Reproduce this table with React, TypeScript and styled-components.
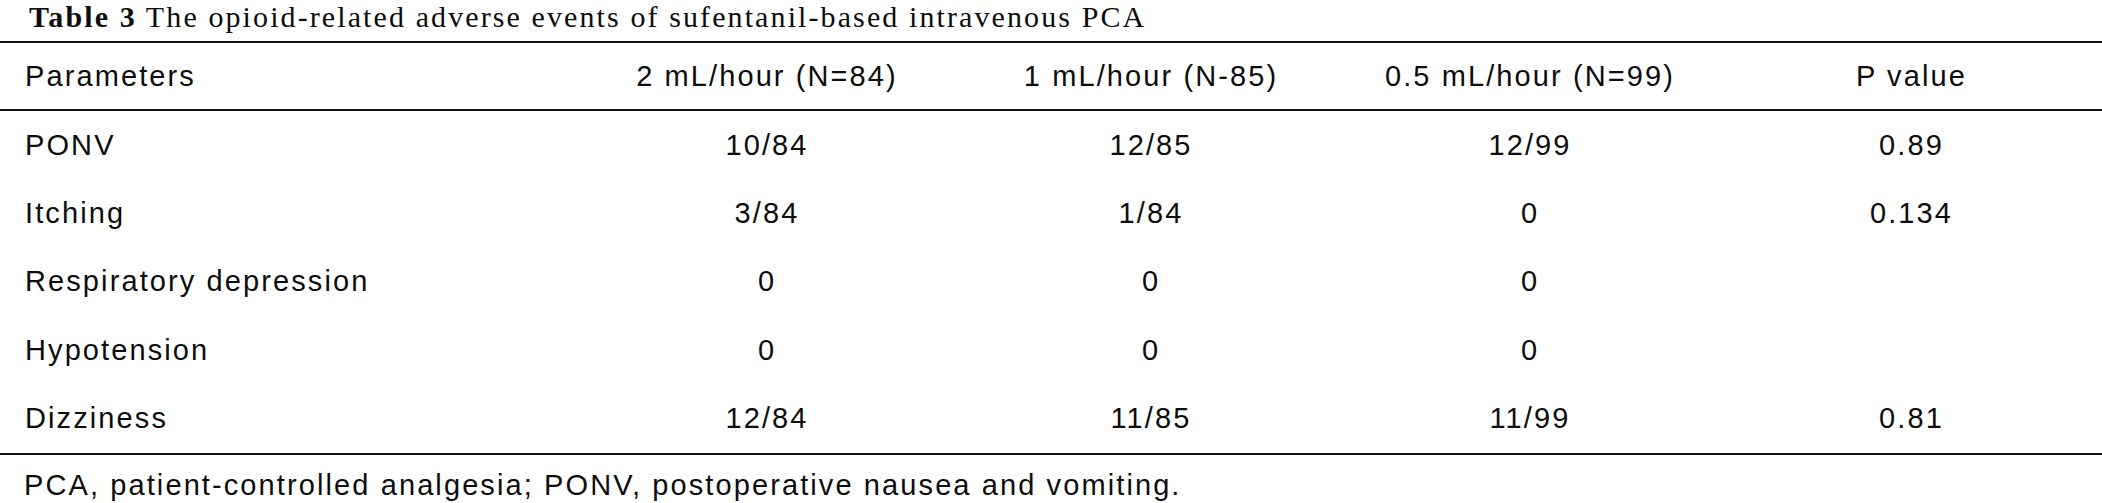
import React from "react";
import styled, { createGlobalStyle } from "styled-components";

const Global = createGlobalStyle`
  html, body { margin: 0; padding: 0; background: #fff; }
  body { width: 2102px; overflow: hidden; }
`;

const Page = styled.div`
  width: 2102px;
  height: 503px;
  background: #fff;
  color: #0d0d0d;
  overflow: hidden;
`;

const Caption = styled.div`
  font-family: "Liberation Serif", "Times New Roman", serif;
  font-size: 30px;
  line-height: 33px;
  padding: 0 0 8px 29px;
  white-space: nowrap;
  letter-spacing: 2.1px;
`;

const CaptionLabel = styled.b`
  font-weight: 700;
`;

const Table = styled.div`
  display: grid;
  grid-template-columns: 571px 392px 376px 382px 381px;
  border-top: 2px solid #111;
  border-bottom: 2px solid #111;
  font-family: "Liberation Sans", Arial, sans-serif;
  font-size: 29px;
  letter-spacing: 2.1px;
`;

const Cell = styled.div<{ $first?: boolean; $head?: boolean }>`
  display: flex;
  align-items: center;
  justify-content: ${(p) => (p.$first ? "flex-start" : "center")};
  padding-left: ${(p) => (p.$first ? "25px" : "0")};
  height: ${(p) => (p.$head ? "66px" : "68.4px")};
  border-bottom: ${(p) => (p.$head ? "2px solid #111" : "none")};
  white-space: nowrap;
`;

const Footnote = styled.div`
  font-family: "Liberation Sans", Arial, sans-serif;
  font-size: 29px;
  line-height: 33px;
  letter-spacing: 2.1px;
  padding: 14px 0 0 24px;
  white-space: nowrap;
`;

const headers = [
  "Parameters",
  "2 mL/hour (N=84)",
  "1 mL/hour (N-85)",
  "0.5 mL/hour (N=99)",
  "P value",
];

const rows: string[][] = [
  ["PONV", "10/84", "12/85", "12/99", "0.89"],
  ["Itching", "3/84", "1/84", "0", "0.134"],
  ["Respiratory depression", "0", "0", "0", ""],
  ["Hypotension", "0", "0", "0", ""],
  ["Dizziness", "12/84", "11/85", "11/99", "0.81"],
];

export default function App() {
  return (
    <Page>
      <Global />
      <Caption>
        <CaptionLabel>Table 3</CaptionLabel> The opioid-related adverse events of sufentanil-based intravenous PCA
      </Caption>
      <Table>
        {headers.map((h, i) => (
          <Cell key={h} $head $first={i === 0}>
            {h}
          </Cell>
        ))}
        {rows.map((r, ri) =>
          r.map((c, ci) => (
            <Cell key={`${ri}-${ci}`} $first={ci === 0}>
              {c}
            </Cell>
          ))
        )}
      </Table>
      <Footnote>PCA, patient-controlled analgesia; PONV, postoperative nausea and vomiting.</Footnote>
    </Page>
  );
}
